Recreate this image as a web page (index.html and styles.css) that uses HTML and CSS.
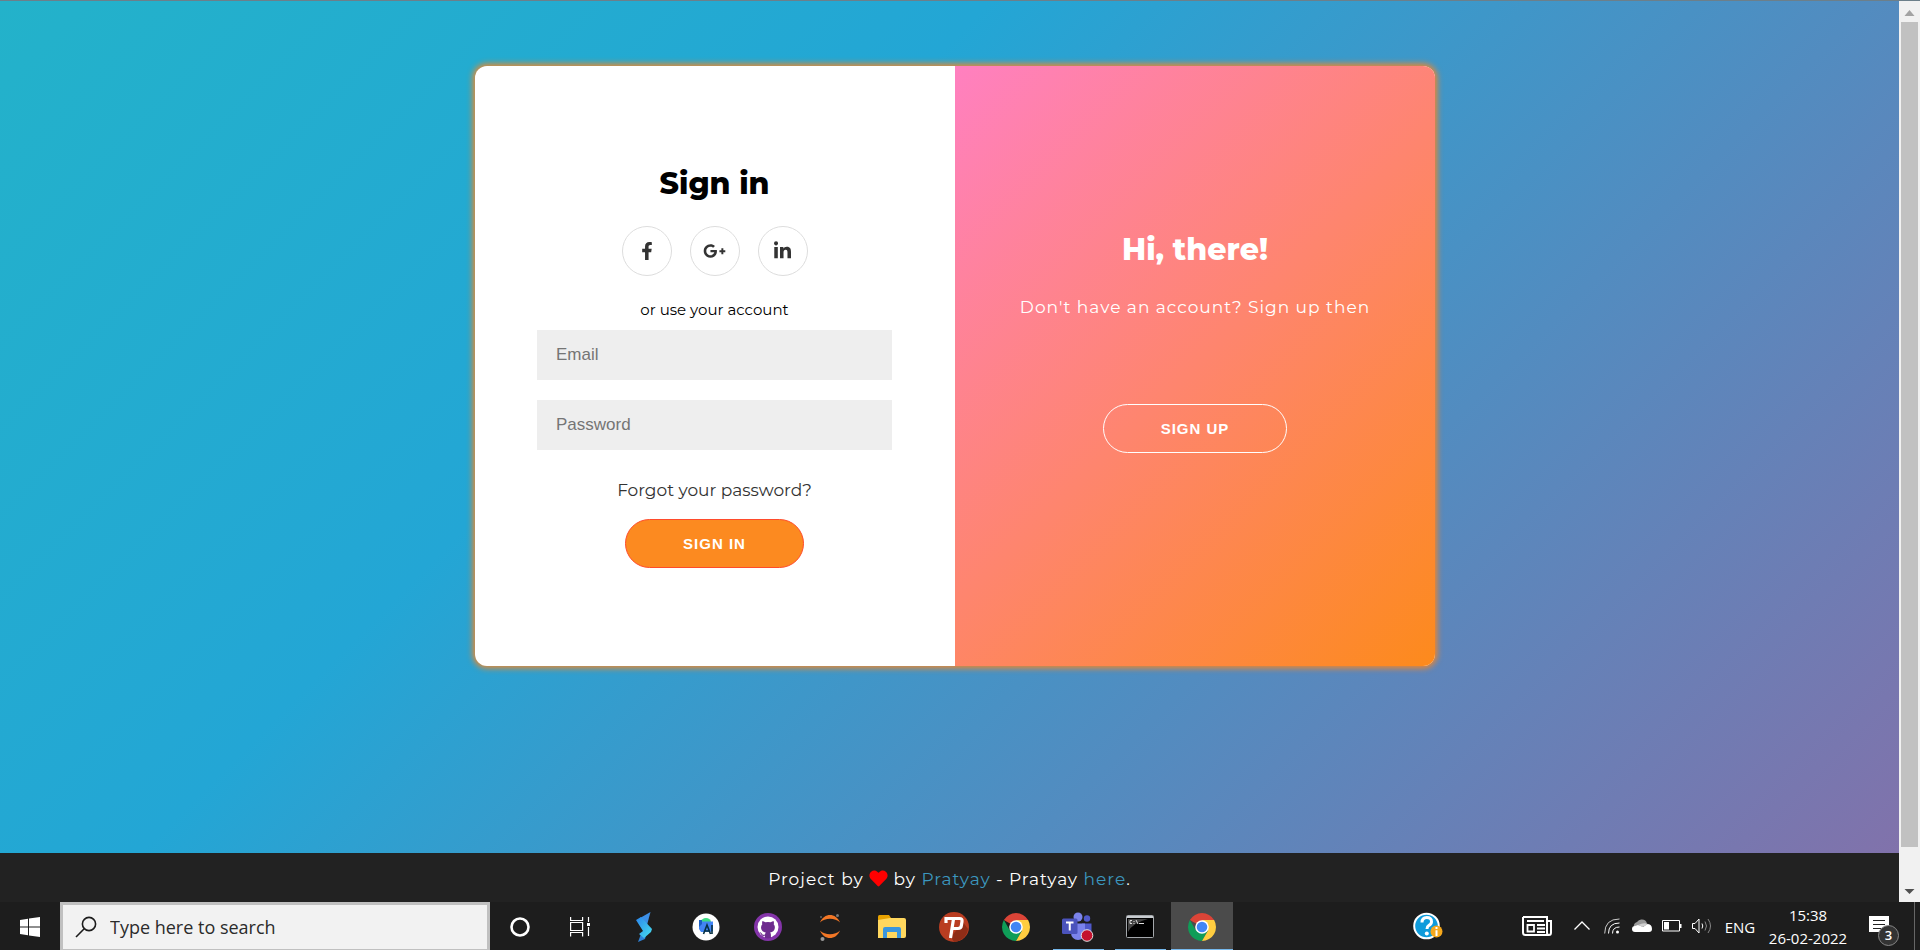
FILE: index.html
```html
<!DOCTYPE html>
<html lang="en">
<head>
<meta charset="utf-8">
<title>Sign in</title>
<link rel="stylesheet" href="styles.css">
</head>
<body>
<div class="screen">
  <div class="browser">
    <div class="page">
      <main class="stage">
        <div class="card">
          <form class="signin">
            <h1 class="title">Sign in</h1>
            <div class="social">
              <a href="#" class="social-link" aria-label="Facebook"><svg width="12" height="18" viewBox="0 0 320 512"><path fill="currentColor" d="M279.14 288l14.22-92.66h-88.91v-60.13c0-25.35 12.42-50.06 52.24-50.06h40.42V6.26S260.43 0 225.36 0c-73.22 0-121.08 44.38-121.08 124.72v70.62H22.89V288h81.39v224h100.17V288z"/></svg></a>
              <a href="#" class="social-link" aria-label="Google Plus"><svg width="23" height="18" viewBox="0 0 640 512"><path fill="currentColor" d="M386.061 228.496c1.834 9.692 3.143 19.384 3.143 31.956C389.204 370.205 315.599 448 204.8 448c-106.084 0-192-85.915-192-192s85.916-192 192-192c51.864 0 95.083 18.859 128.611 50.292l-52.126 50.03c-14.145-13.621-39.028-29.599-76.485-29.599-65.484 0-118.92 54.221-118.92 121.277 0 67.056 53.436 121.277 118.92 121.277 75.961 0 104.513-54.745 108.965-82.773H204.8v-66.009h181.261zm185.406 6.437V179.2h-56.001v55.733h-55.733v56.001h55.733v55.733h56.001v-55.733H627.2v-56.001h-55.733z"/></svg></a>
              <a href="#" class="social-link" aria-label="LinkedIn"><svg width="17" height="20" viewBox="0 0 448 512"><path fill="currentColor" d="M100.28 448H7.4V148.9h92.88zM53.79 108.1C24.09 108.1 0 83.5 0 53.8a53.79 53.79 0 0 1 107.58 0c0 29.7-24.1 54.3-53.79 54.3zM447.9 448h-92.68V302.4c0-34.7-.7-79.2-48.29-79.2-48.29 0-55.69 37.7-55.69 76.7V448h-92.78V148.9h89.08v40.8h1.3c12.4-23.5 42.69-48.3 87.88-48.3 94 0 111.28 61.9 111.28 142.3V448z"/></svg></a>
            </div>
            <span class="hint">or use your account</span>
            <input class="field" type="email" placeholder="Email" aria-label="Email">
            <input class="field" type="password" placeholder="Password" aria-label="Password">
            <a href="#" class="forgot">Forgot your password?</a>
            <button type="button" class="pill">Sign In</button>
          </form>
          <section class="welcome">
            <h2 class="title title-light">Hi, there!</h2>
            <p class="lead">Don't have an account? Sign up then</p>
            <button type="button" class="pill pill-ghost">Sign Up</button>
          </section>
        </div>
      </main>
      <footer class="footer">
        <p class="credit">Project by <svg class="heart" width="19" height="17" viewBox="0 0 512 480" role="img" aria-label="love"><path fill="#f00" d="M462.300 46.600C407.500 0 326 8.300 275.700 60.200L256 80.500l-19.700-20.300C186.100 8.300 104.500 0 49.700 46.600c-62.800 53.600-66.100 149.800-9.900 207.900l193.500 199.800c12.500 12.900 32.800 12.900 45.300 0l193.500-199.800c56.300-58.100 53-154.300-9.800-207.900z"/></svg> by <a href="#">Pratyay</a> - Pratyay <a href="#">here</a>.</p>
      </footer>
    </div>
    <div class="scrollbar" aria-hidden="true">
      <svg class="arrow" width="21" height="21" viewBox="0 0 21 21"><path fill="#a3a3a3" d="M10.500 9l5 6h-10z"/></svg>
      <div class="thumb"></div>
      <svg class="arrow" width="21" height="21" viewBox="0 0 21 21"><path fill="#505050" d="M10.500 13l5-5h-10z"/></svg>
    </div>
  </div>

  <nav class="taskbar" aria-label="Taskbar">
    <button type="button" class="start" aria-label="Start"><svg width="20" height="20" viewBox="0 0 20 20" fill="#fff"><path d="M0 3l8-1.200V9.500H0zM9 1.600L20 0v9.500H9zM0 10.500h8v7.700L0 17zM9 10.500h11V20L9 18.400z"/></svg></button>
    <label class="search">
      <svg width="22" height="22" viewBox="0 0 22 22" fill="none" stroke="#1c1c1c" stroke-width="1.600"><circle cx="14" cy="8" r="6.600"/><path d="M9.200 12.800L1 21"/></svg>
      <input class="search-input" type="text" placeholder="Type here to search">
    </label>
    <button type="button" class="tool" aria-label="Cortana"><svg width="22" height="22" viewBox="0 0 22 22"><circle cx="11" cy="11" r="8.500" fill="none" stroke="#fff" stroke-width="2.600"/></svg></button>
    <button type="button" class="tool" aria-label="Task View"><svg width="20" height="20" viewBox="0 0 20 20" fill="none" stroke="#fff" stroke-width="1.200"><path d="M.6 0v3.500h12V0M.6 5.500h12v8H.6zM.6 19.500v-4h12v4M18.500 0v5M18.500 10v9"/><path fill="#fff" stroke="none" d="M17 6h3v3h-3z"/></svg></button>
    <div class="apps">
      <button type="button" class="app" aria-label="S editor"><svg width="18" height="32" viewBox="0 0 18 32"><defs><linearGradient id="s" x1="0" y1="0" x2="1" y2="1"><stop offset="0" stop-color="#2b86ee"/><stop offset="1" stop-color="#46dfee"/></linearGradient></defs><path fill="#3c8fe6" d="M15.500 1L5 7l-1 4 8 3z"/><path fill="#2f82d8" d="M3 31l7-3 2-7-6 2z"/><path fill="url(#s)" d="M1 9l5-3 11 12-1 3-7 6-5-4 4-3z"/></svg></button>
      <button type="button" class="app" aria-label="Android Studio"><svg width="28" height="28" viewBox="0 0 28 28"><circle cx="14" cy="14" r="13.500" fill="#fff"/><path d="M9 9a5 4 0 0 1 10 0z" fill="#3ddc84"/><path d="M7 8.500h14V18l-3 1H9l-2-3z" fill="#4285f4"/><path d="M7 7h3v4L7 14z" fill="#1a5fc4"/><path d="M11.500 21l3.500-9 3.500 9M13 18h4M20 12v9" fill="none" stroke="#073042" stroke-width="1.600"/></svg></button>
      <button type="button" class="app" aria-label="GitHub Desktop"><svg width="28" height="28" viewBox="0 0 28 28"><circle cx="14" cy="14" r="14" fill="#8434a9"/><circle cx="14" cy="14" r="10.500" fill="#fff"/><path fill="#6d2b8e" d="M8.500 8l3 1.200a10 10 0 0 1 5 0l3-1.200c.6 1.300.5 2.500.2 3.200 1 1.200 1.300 2.300 1.100 4-.4 2.600-2.200 3.800-4.700 4.200.7.800.8 1.500.8 2.600v3a11 11 0 0 1-6 0v-2.200c-2.900.6-3.700-.8-4.300-2.200l-1-1.200c1.500-.3 2 1 2.700 1.800.8.700 1.800.6 2.700.2 0-.8.300-1.500.8-2-2.600-.4-4.300-1.600-4.700-4.200-.2-1.700.2-2.800 1.200-4-.3-.7-.4-1.900.2-3.200z"/></svg></button>
      <button type="button" class="app" aria-label="Jupyter"><svg width="24" height="30" viewBox="0 0 24 30"><path fill="#f37726" d="M2 10.500C6 .5 18 .5 22 10.500 17 5.500 7 5.500 2 10.500zM2 18.500c4 10 16 10 20 0-5 5-15 5-20 0z"/><circle cx="19.500" cy="3.500" r="1.500" fill="#777"/><circle cx="4.500" cy="27" r="2" fill="#999"/><circle cx="3" cy="5" r="1" fill="#666"/></svg></button>
      <button type="button" class="app" aria-label="File Explorer"><svg width="28" height="24" viewBox="0 0 28 24"><path fill="#e8a200" d="M0 1.500Q0 0 1.500 0H11l2 3v4H0z"/><path fill="#ffd75e" d="M0 5l12-2h14q2 0 2 2v16q0 2-2 2H0z"/><path fill="#3a96dd" d="M5 14q0-2 2-2h14q2 0 2 2v9h-4v-6H9v6H5z"/></svg></button>
      <button type="button" class="app" aria-label="Psiphon"><svg width="30" height="30" viewBox="0 0 30 30"><circle cx="15" cy="15" r="15" fill="#b93d21"/><path fill="#8f2d17" d="M12 25l12-15 5 7a15 15 0 0 1-14 13z"/><path fill="none" stroke="#fff" stroke-width="3.200" d="M7 11V6.500h13.500q3 0 2.500 3l-.6 4q-.4 3-3.400 3h-5M14.500 7L11.500 26"/></svg></button>
      <button type="button" class="app" aria-label="Chrome"><svg width="28" height="28" viewBox="0 0 28 28"><path fill="#db4437" d="M14 14L1.880 7A14 14 0 0 1 26.120 7z"/><path fill="#0f9d58" d="M1.880 7A14 14 0 0 0 14 28l6.060-10.500L14 14 7.940 17.500z"/><path fill="#ffcd40" d="M26.120 7A14 14 0 0 1 14 28l6.060-10.500L14 7z"/><circle cx="14" cy="14" r="6.800" fill="#fff"/><circle cx="14" cy="14" r="5.300" fill="#4285f4"/></svg></button>
      <button type="button" class="app app-running" aria-label="Teams"><svg width="32" height="30" viewBox="0 0 32 30"><circle cx="16" cy="5" r="4.500" fill="#7b83eb"/><circle cx="25" cy="6.500" r="3.200" fill="#5059c9"/><path fill="#5059c9" d="M20 11.500h9.500V20q0 4-5 4h-4.500z"/><path fill="#7b83eb" d="M9 11.500h14V21a7 7 0 0 1-14 0z"/><rect x="0" y="6.500" width="15.500" height="15.500" rx="1.500" fill="#4b53bc"/><path d="M4 10.500h7.500M7.750 10.500V18.500" stroke="#fff" stroke-width="2" fill="none"/><circle cx="25" cy="23.500" r="5.800" fill="#c4122e" stroke="#e4e4e4"/></svg></button>
      <button type="button" class="app app-running" aria-label="Command Prompt"><svg width="28" height="24" viewBox="0 0 28 24"><rect x=".5" y=".5" width="27" height="22" rx="1" fill="#000" stroke="#a4a8ac"/><path fill="#c8ccd0" d="M1 1h26v2H1z"/><path fill="#444" d="M2 4h20Q6 8 2 17z"/><path d="M6 5.500H4v3h2M8 6v1M8 8v1M10 5l2 4M13 8.500h5" fill="none" stroke="#ddd"/></svg></button>
      <button type="button" class="app app-active" aria-label="Chrome, active window"><svg width="28" height="28" viewBox="0 0 28 28"><path fill="#db4437" d="M14 14L1.880 7A14 14 0 0 1 26.120 7z"/><path fill="#0f9d58" d="M1.880 7A14 14 0 0 0 14 28l6.060-10.500L14 14 7.940 17.500z"/><path fill="#ffcd40" d="M26.120 7A14 14 0 0 1 14 28l6.060-10.500L14 7z"/><circle cx="14" cy="14" r="6.800" fill="#fff"/><circle cx="14" cy="14" r="5.300" fill="#4285f4"/></svg></button>
    </div>
    <div class="tray">
      <button type="button" class="help" aria-label="Help"><svg width="30" height="28" viewBox="0 0 30 28"><circle cx="13.500" cy="14" r="12.300" fill="#0f9bdb" stroke="#fff" stroke-width="2"/><path d="M9 10.500q0-5 4.800-5t4.700 4.200q0 2.300-2.500 3.600-2 1.200-2 3.700" fill="none" stroke="#fff" stroke-width="3"/><circle cx="13.800" cy="21.500" r="2" fill="#fff"/><circle cx="23.500" cy="19.500" r="6" fill="#f6a81c"/><path d="M23.500 15v2M23.500 18.200V24" stroke="#fff" stroke-width="2"/></svg></button>
      <button type="button" class="news" aria-label="News"><svg width="30" height="20" viewBox="0 0 30 20" fill="none" stroke="#fff" stroke-width="2"><path d="M1 1h24v15.500q0 2.500 2 2.500t2-2.500V5h-3M1 1v15.500Q1 19 3.500 19H27"/><path d="M5 5h17"/><path stroke-width="1.800" d="M5.500 9h6.500v6.500H5.500zM15 9h8M15 12.500h8M15 16h8"/></svg></button>
      <div class="tray-icons">
        <svg width="16" height="10" viewBox="0 0 16 10"><path d="M.5 8.500L8 1l7.500 7.500" fill="none" stroke="#fff" stroke-width="1.300"/></svg>
        <svg width="16" height="16" viewBox="0 0 16 16" fill="none" stroke="#fff"><path stroke="#ccc" d="M.7 15.500Q.7 1 15.500 1"/><path d="M4.500 15.500Q4.500 5 15.500 5M8.500 15.500Q8.500 9 15.500 9"/><circle cx="13.500" cy="14" r="1.500" fill="#fff" stroke="none"/></svg>
        <svg width="20" height="14" viewBox="0 0 20 14"><path fill="#999" d="M2 8a4 4 0 0 1 3-5Q7 0 10 .5q4 0 5 4L9 9z"/><path fill="#fff" d="M3 13a3 3 0 0 1 0-6l3-1 5 2 4-3q5 0 5 5 0 3-3 3z"/><path fill="#d0d0d0" d="M6 6q6-3 10-1l-5 3z"/></svg>
        <svg width="20" height="12" viewBox="0 0 20 12"><path fill="none" stroke="#fff" d="M.5.500h17v10.500H.5z"/><path fill="#fff" d="M2 2h5v7.500H2zM18 4h1.500v4H18z"/></svg>
        <svg width="20" height="18" viewBox="0 0 20 18" fill="none" stroke="#fff"><path d="M.5 6.500h2.500l4-4.500v14l-4-4.500H.5z"/><path d="M10 6.500q1.500 2.500 0 5"/><path stroke="#888" d="M13 4.500q3 4.500 0 9M16 2q5 7 0 14"/></svg>
      </div>
      <span class="lang">ENG</span>
      <time class="clock" datetime="2022-02-26T15:38"><span>15:38</span><span>26-02-2022</span></time>
      <button type="button" class="notices" aria-label="3 notifications"><svg width="20" height="20" viewBox="0 0 20 20"><path fill="#fff" d="M0 0h20v16h-6l-4 4v-4H0z"/><path stroke="#222" d="M4 4.500h12M4 8.500h12M4 12.500h8"/></svg><span class="badge">3</span></button>
      <span class="peek"></span>
    </div>
  </nav>
</div>
</body>
</html>
```

FILE: styles.css
```css
* { box-sizing: border-box; }

body {
  margin: 0;
  font-family: Montserrat, Inter, "Open Sans", sans-serif;
}

button { font: inherit; cursor: pointer; }
a { text-decoration: none; }

.screen { display: flex; flex-direction: column; min-height: 100vh; }

.browser { flex: 1; display: flex; border-top: 1px solid #6c7f8a; }

.page { flex: 1; display: flex; flex-direction: column; }

.stage {
  flex: 1;
  display: flex;
  justify-content: center;
  align-items: flex-start;
  padding: 65px 0 65px 11px;
  background: linear-gradient(135deg, #23b2ca 0%, #23a6d5 36%, #8172ab 100%);
}

.card {
  display: grid;
  grid-template-columns: 1fr 1fr;
  width: 100%;
  max-width: 960px;
  min-height: 600px;
  border-radius: 12px;
  overflow: hidden;
  background: #fff;
  box-shadow: 0 0 6px 2px #fc8621;
}

.signin, .welcome {
  display: flex;
  flex-direction: column;
  align-items: center;
  justify-content: center;
  text-align: center;
}

.signin { padding: 0 63px 0 62px; }

.title { margin: 0; font-size: 30px; line-height: 40px; font-weight: 800; color: #000; }
.title-light { color: #fff; }

.social { display: flex; gap: 18px; margin: 22px 0 24px; }

.social-link {
  display: flex;
  align-items: center;
  justify-content: center;
  width: 50px;
  height: 50px;
  border: 1px solid #ddd;
  border-radius: 50%;
  color: #333;
}

.hint { font-size: 15px; line-height: 20px; }

.field {
  width: 100%;
  height: 50px;
  margin: 10px 0;
  padding: 0 19px;
  border: 0;
  background: #eee;
  font: 17px "Liberation Sans", Arial, sans-serif;
}
.field::placeholder { color: #757575; }

.forgot { margin: 18px 0 17px; font-size: 17px; line-height: 24px; color: #333; }

.pill {
  height: 49px;
  padding: 0 57px;
  border: 1px solid #ff4b2b;
  border-radius: 25px;
  background: #fc8a20;
  color: #fff;
  font: bold 15px "Liberation Sans", Arial, sans-serif;
  letter-spacing: 1px;
  text-transform: uppercase;
}
.pill-ghost { background: transparent; border-color: #fff; }

.welcome {
  padding: 0 50px 49px;
  color: #fff;
  background: linear-gradient(135deg, #ff80c0 0%, #fe856e 50%, #fd8a1c 100%);
}

.lead, .credit { font-size: 17px; line-height: 25px; letter-spacing: 1px; }
.lead { margin: 25px 0; padding-bottom: 59px; }

.footer { padding: 14px 12px 10px; background: #222; color: #fff; text-align: center; }
.credit { margin: 0; }
.footer a { color: #3c97bf; }
.heart { vertical-align: -2px; }

.scrollbar { display: flex; flex-direction: column; width: 21px; background: #f1f1f1; }
.arrow { display: block; }
.thumb { flex: 1; margin: 0 2px 34px; background: #c1c1c1; }

.taskbar {
  display: flex;
  align-items: stretch;
  height: 48px;
  background: #1d1d1d;
  color: #fff;
  font-family: "Segoe UI", "Open Sans", "Noto Sans", sans-serif;
}

.taskbar button {
  display: flex;
  align-items: center;
  justify-content: center;
  padding: 0;
  border: 0;
  background: none;
  color: #fff;
}

.taskbar .start { width: 60px; padding-top: 2px; }

.search {
  display: flex;
  align-items: center;
  gap: 13px;
  width: 430px;
  padding: 0 12px;
  border: 3px solid #c0c0c0;
  border-bottom-width: 1px;
  background: #f2f2f2;
}
.search-input {
  flex: 1;
  padding: 0;
  border: 0;
  background: none;
  font: 18px "Segoe UI", "Open Sans", sans-serif;
}
.search-input::placeholder { color: #2b2b2b; }

.taskbar .tool { width: 60px; padding-top: 2px; }

.apps { display: flex; margin-left: 3px; }
.taskbar .app { width: 62px; padding-top: 3px; border-bottom: 1px solid transparent; }
.taskbar .app-running {
  background: linear-gradient(#76b9ed, #76b9ed) center bottom / 51px 1px no-repeat border-box;
}
.taskbar .app-active { background: #4b4b4b; border-bottom-color: #76b9ed; }

.tray { display: flex; align-items: center; margin-left: auto; }
.help { margin-right: 79px; }
.news { margin-right: 15px; }
.tray-icons { display: grid; grid-template-columns: repeat(5, 30px); place-items: center; }
.lang { width: 46px; padding-top: 2px; text-align: center; font-size: 15px; }
.clock {
  display: flex;
  flex-direction: column;
  width: 90px;
  padding-top: 1px;
  text-align: center;
  font-size: 15px;
  line-height: 23px;
}
.taskbar .notices { position: relative; margin: 0 25px 0 16px; }
.badge {
  position: absolute;
  left: 9px;
  top: 9px;
  width: 21px;
  height: 21px;
  border: 1px solid #888;
  border-radius: 50%;
  background: #333;
  font-size: 13px;
  line-height: 19px;
  font-weight: 600;
}
.peek { align-self: stretch; width: 6px; border-left: 1px solid #666; }
```
